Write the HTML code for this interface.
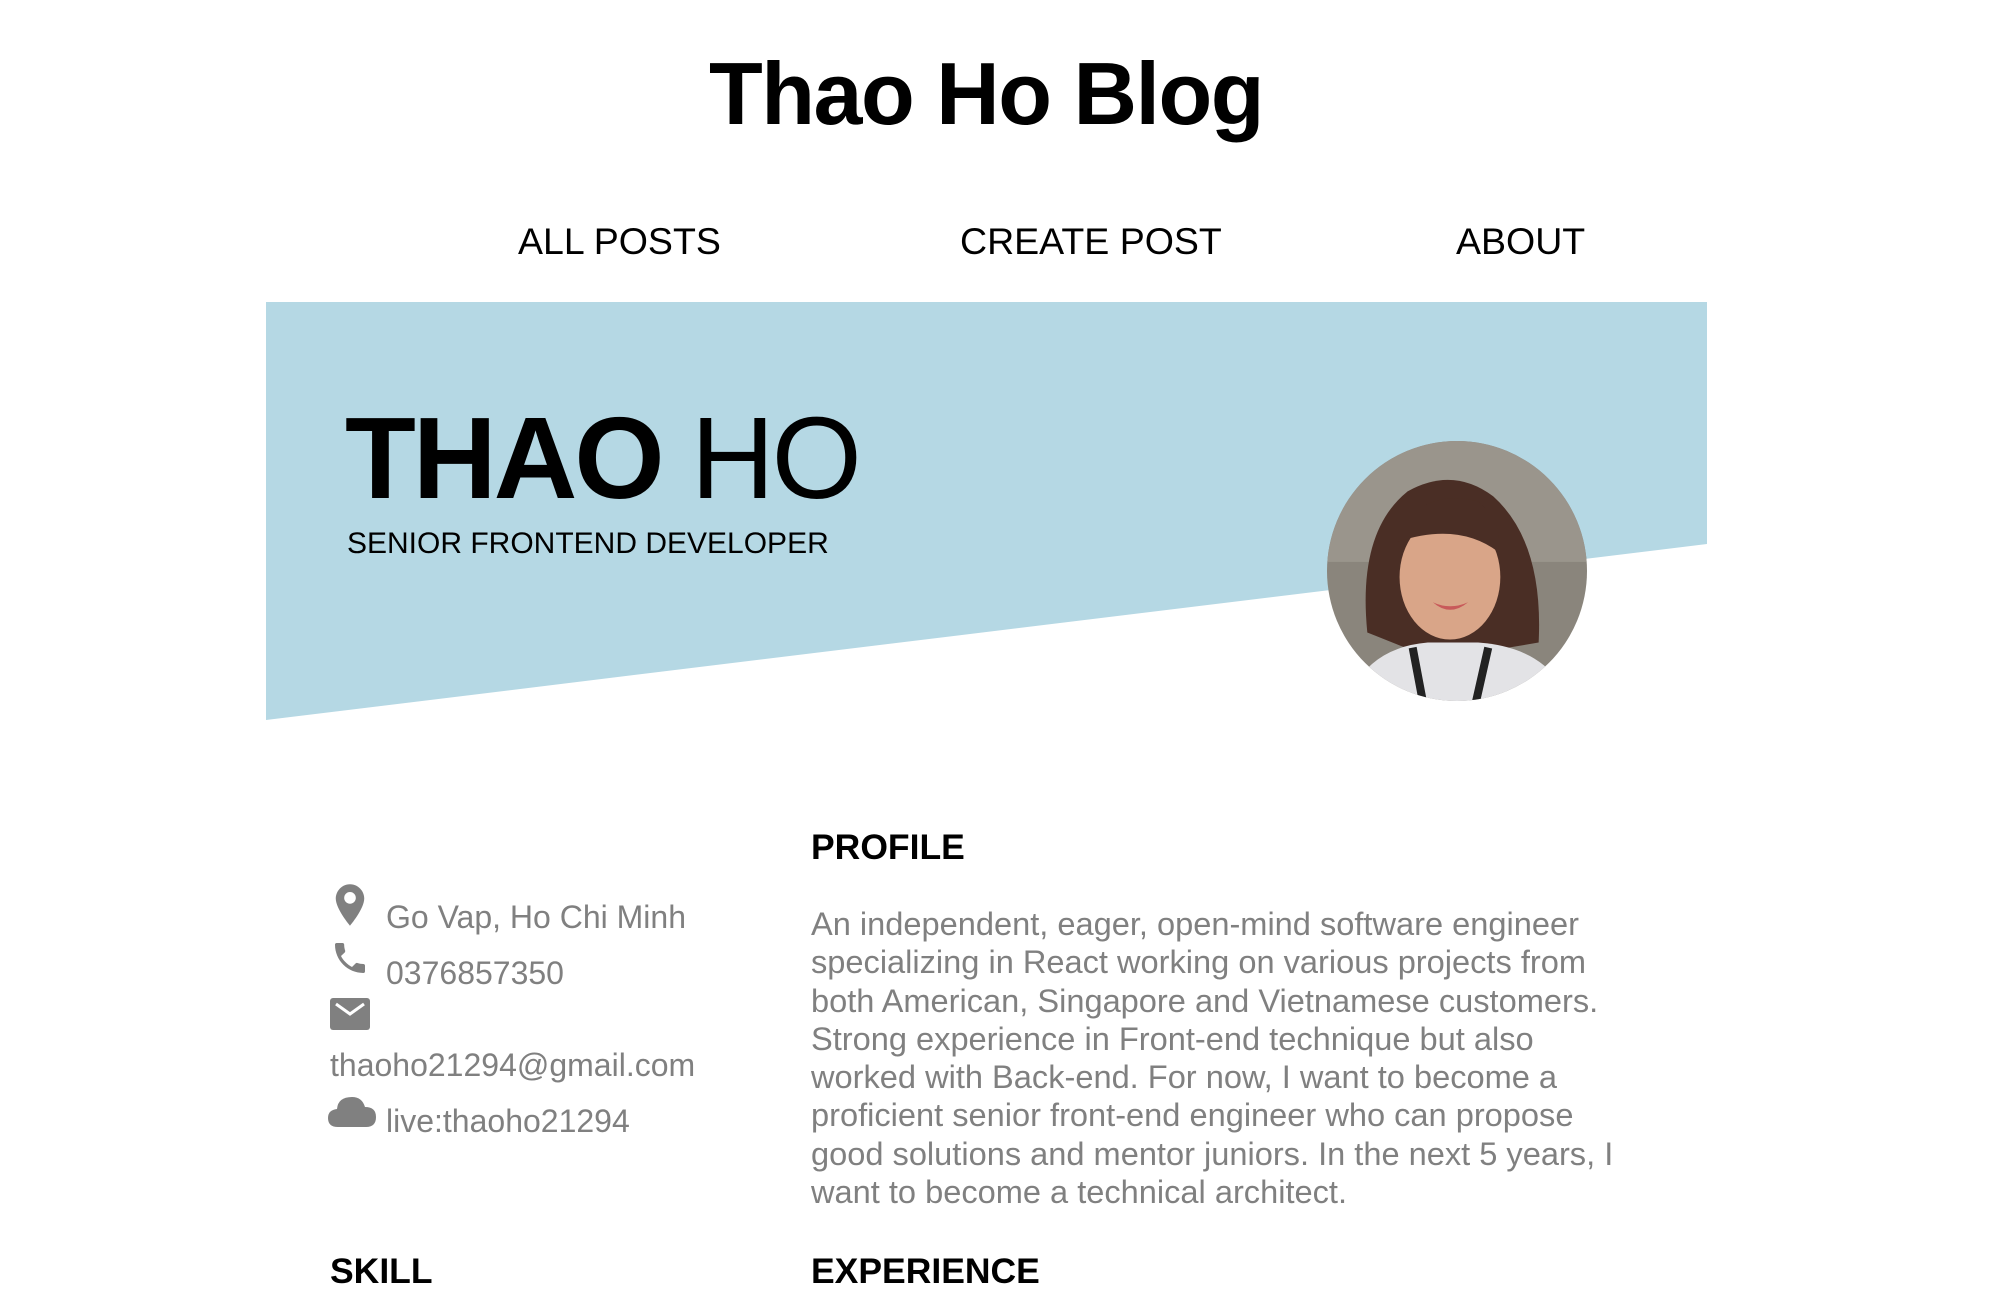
<!DOCTYPE html>
<html><head><meta charset="utf-8"><style>
*{margin:0;padding:0;box-sizing:border-box}
body{width:1998px;height:1306px;background:#fff;font-family:"Liberation Sans",sans-serif;position:relative;overflow:hidden;color:#000}
.a{position:absolute;white-space:nowrap}
h1{position:absolute;left:-13px;width:1998px;text-align:center;top:43px;font-size:88px;font-weight:bold;letter-spacing:-1.5px}
.nav{font-size:37.5px;top:220px}
.p{font-size:32.6px;line-height:38.3px;color:#808080}
.ct{font-size:32px;color:#808080}
.hd{font-size:35.5px;font-weight:bold}
</style></head><body>
<h1>Thao Ho Blog</h1>
<div class="a nav" style="left:518px">ALL POSTS</div>
<div class="a nav" style="left:960px">CREATE POST</div>
<div class="a nav" style="left:1456px">ABOUT</div>
<svg class="a" style="left:0;top:0" width="1998" height="760">
<polygon points="266,302 1707,302 1707,544 266,720" fill="#b5d8e4"/>
</svg>
<div class="a" style="left:345px;top:391px;font-size:116px;letter-spacing:-3px"><b>THAO</b> HO</div>
<div class="a" style="left:347px;top:527px;font-size:30px">SENIOR FRONTEND DEVELOPER</div>
<svg class="a" style="left:1327px;top:441px" width="260" height="260" viewBox="0 0 258 258">
<defs><clipPath id="c"><circle cx="129" cy="129" r="129"/></clipPath></defs>
<g clip-path="url(#c)">
<rect width="258" height="258" fill="#8a857c"/>
<rect x="0" y="0" width="258" height="120" fill="#9a958c"/>
<path d="M40 190 Q30 90 80 50 Q125 25 165 55 Q215 100 210 200 L150 210 L90 210Z" fill="#4a2e25"/>
<ellipse cx="122" cy="135" rx="50" ry="62" fill="#d9a588"/>
<path d="M70 100 Q90 45 150 60 Q175 80 170 110 Q130 80 70 100Z" fill="#4a2e25"/>
<path d="M105 160 Q122 175 140 160 Q122 168 105 160Z" fill="#c85a5a"/>
<path d="M20 258 Q40 205 100 200 L150 200 Q220 205 240 258Z" fill="#e3e3e6"/>
<path d="M85 205 L95 258 M160 205 L148 258" stroke="#222" stroke-width="8"/>
</g></svg>
<div class="a hd" style="left:811px;top:827px">PROFILE</div>
<div class="a p" style="left:811px;top:905px">An independent, eager, open-mind software engineer<br>specializing in React working on various projects from<br>both American, Singapore and Vietnamese customers.<br>Strong experience in Front-end technique but also<br>worked with Back-end. For now, I want to become a<br>proficient senior front-end engineer who can propose<br>good solutions and mentor juniors. In the next 5 years, I<br>want to become a technical architect.</div>
<svg class="a" style="left:334px;top:883px" width="32" height="44" viewBox="0 0 24 34"><path d="M12 1C6 1 1 6 1 12c0 8 11 21 11 21s11-13 11-21C23 6 18 1 12 1zm0 15a4.5 4.5 0 1 1 0-9 4.5 4.5 0 0 1 0 9z" fill="#808080"/></svg>
<div class="a ct" style="left:386px;top:899px">Go Vap, Ho Chi Minh</div>
<svg class="a" style="left:330px;top:938px" width="40" height="40" viewBox="0 0 24 24"><path d="M6.6 10.8c1.4 2.8 3.8 5.1 6.6 6.6l2.2-2.2c.3-.3.7-.4 1-.2 1.1.4 2.3.6 3.6.6.6 0 1 .4 1 1V20c0 .6-.4 1-1 1C10.6 21 3 13.4 3 4c0-.6.4-1 1-1h3.5c.6 0 1 .4 1 1 0 1.3.2 2.5.6 3.6.1.3 0 .7-.2 1L6.6 10.8z" fill="#808080"/></svg>
<div class="a ct" style="left:386px;top:955px">0376857350</div>
<svg class="a" style="left:330px;top:998px" width="42" height="34" viewBox="0 0 42 34"><rect x="0" y="0" width="40" height="32" rx="3" fill="#808080"/><path d="M6 6 L20 16 L34 6" stroke="#fff" stroke-width="3" fill="none"/></svg>
<div class="a ct" style="left:330px;top:1047px">thaoho21294@gmail.com</div>
<svg class="a" style="left:328px;top:1095px" width="50" height="34" viewBox="0 0 50 34"><path d="M10 32 Q0 32 0 23 Q0 15 9 14 Q10 2 24 2 Q34 2 37 12 Q48 12 48 22 Q48 32 38 32Z" fill="#808080"/></svg>
<div class="a ct" style="left:386px;top:1103px">live:thaoho21294</div>
<div class="a hd" style="left:330px;top:1251px">SKILL</div>
<div class="a hd" style="left:811px;top:1251px">EXPERIENCE</div>
</body></html>
